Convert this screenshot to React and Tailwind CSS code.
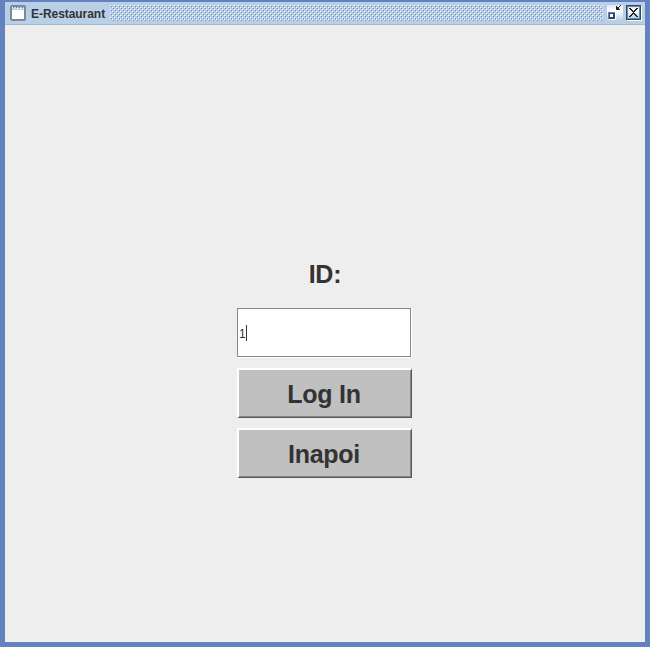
function FrameIcon() {
  return (
    <svg width="16" height="16" viewBox="0 0 16 16" shapeRendering="crispEdges" className="shrink-0">
      <path fill="#7a8a99" d="M1 0h14v1h1v14h-1v1H1v-1H0V1h1z" />
      <path fill="#b8cfe5" d="M2 2h12v3H2z" />
      <path fill="#6382bf" d="M3 2h1v1H3zM6 2h1v1H6zM9 2h1v1H9zM12 2h1v1h-1z" />
      <path fill="#ffffff" d="M2 2h1v1H2zM4 3h1v1H4zM7 3h1v1H7zM10 3h1v1h-1zM13 3h1v1h-1z" />
      <path fill="#ffffff" d="M2 5h12v9H2z" />
    </svg>
  );
}

function Bumps() {
  return (
    <svg width="493" height="16" shapeRendering="crispEdges" className="shrink-0">
      <defs>
        <pattern id="bumps" width="4" height="4" patternUnits="userSpaceOnUse">
          <path fill="#ffffff" d="M0 0h1v1H0zM2 2h1v1H2z" />
          <path fill="#6382bf" d="M1 1h1v1H1zM3 3h1v1H3z" />
        </pattern>
      </defs>
      <rect width="493" height="16" fill="url(#bumps)" />
    </svg>
  );
}

function RestoreIcon() {
  return (
    <svg width="16" height="16" viewBox="0 0 16 16" shapeRendering="crispEdges">
      <defs>
        <linearGradient id="restore" x1="0" y1="0" x2="0" y2="1">
          <stop offset="0" stopColor="#dde8f3" />
          <stop offset="0.35" stopColor="#ffffff" />
          <stop offset="1" stopColor="#b8cfe5" />
        </linearGradient>
      </defs>
      <rect width="16" height="16" fill="url(#restore)" />
      <path fill="#ffffff" d="M2 8h7v7H2z" />
      <path fill="#33465f" fillRule="evenodd" d="M1 7h7v7H1zM3 9v3h3V9z" />
      <path fill="#6382bf" d="M1 7h7v1H1zM1 8h1v6H1z" />
      <path fill="#222222" d="M9 1h1v2h1V2h1V1h1V0h1v1h-1v1h-1v1h-1v1h2v1H9z" />
      <path fill="#222222" d="M10 2h1v2h-1zM11 3h1v1h-1zM12 1h1v1h-1z" />
    </svg>
  );
}

function CloseIcon() {
  return (
    <svg width="16" height="16" viewBox="0 0 16 16" shapeRendering="crispEdges">
      <defs>
        <linearGradient id="close" x1="0" y1="0" x2="0" y2="1">
          <stop offset="0" stopColor="#dde8f3" />
          <stop offset="0.35" stopColor="#ffffff" />
          <stop offset="1" stopColor="#b8cfe5" />
        </linearGradient>
      </defs>
      <path fill="#ffffff" d="M1 1h15v15H1z" />
      <path fill="#33465f" d="M0 0h15v15H0z" />
      <rect x="1" y="1" width="13" height="13" fill="#7087a8" />
      <rect x="2" y="2" width="11" height="11" fill="url(#close)" />
      <path
        fill="#222222"
        d="M3 3h2v1h1v1h1v1h1V5h1V4h1V3h2v1h-1v1h-1v1H9v1H8v1h1v1h1v1h1v1h1v1h-2v-1H9v-1H8V9H7v1H6v1H5v1H3v-1h1v-1h1V9h1V8h1V7H6V6H5V5H4V4H3z"
      />
    </svg>
  );
}

function MetalButton({ children }) {
  return (
    <button className="block h-[50px] w-[175px] border-t-2 border-l-2 border-r border-b border-t-white border-l-white border-r-[#5a5a5a] border-b-[#5a5a5a] bg-[#c0c0c0] pr-[2px] text-[25px] font-bold leading-[46px] tracking-[-0.25px] text-[#333333] shadow-[inset_-1px_-1px_0_#868686]">
      {children}
    </button>
  );
}

export default function App() {
  return (
    <div className="flex h-[647px] w-[650px] flex-col border-x-[5px] border-t-2 border-b-[5px] border-[#6382bf] bg-[#eeeeee] font-['Liberation_Sans',Arial,sans-serif] text-[#333333]">
      <header className="flex h-[23px] shrink-0 items-center border-b border-[#a3b8cc] bg-[#b8cfe5] pl-[5px]">
        <FrameIcon />
        <span className="ml-[5px] w-[79px] shrink-0 whitespace-nowrap pt-[2px] text-[12px] font-bold tracking-[-0.05px]">E-Restaurant</span>
        <Bumps />
        <div className="ml-[4px] flex shrink-0 gap-[3px]">
          <RestoreIcon />
          <CloseIcon />
        </div>
      </header>
      <main className="flex flex-1 flex-col pt-[233px] pl-[232px]">
        <label className="block h-[32px] w-[175px] pl-[1px] text-center text-[25px] font-bold leading-[32px] tracking-[-0.2px]">ID:</label>
        <div className="mt-[18px] flex h-[50px] w-[175px] border-r border-b border-white">
          <div className="flex h-[49px] w-[174px] items-center border border-[#7a8a99] bg-white pl-[1px] text-[12px]">
            <span className="pt-[2px]">1</span>
            <span className="h-[16px] w-px bg-[#333333]" />
          </div>
        </div>
        <div className="mt-[10px] flex flex-col gap-[10px]">
          <MetalButton>Log In</MetalButton>
          <MetalButton>Inapoi</MetalButton>
        </div>
      </main>
    </div>
  );
}
